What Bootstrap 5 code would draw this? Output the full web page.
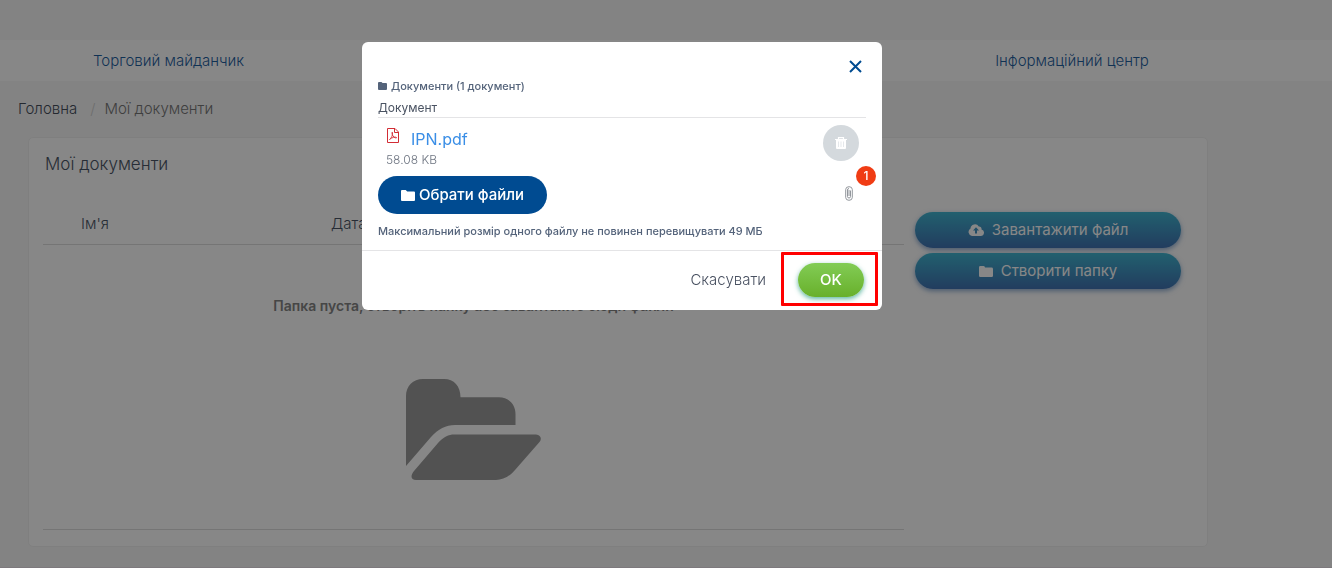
<!DOCTYPE html>
<html lang="uk">
<head>
<meta charset="utf-8">
<meta name="viewport" content="width=device-width, initial-scale=1">
<title>Мої документи</title>
<link href="https://cdn.jsdelivr.net/npm/bootstrap@5.3.0/dist/css/bootstrap.min.css" rel="stylesheet">
<style>
body{font-family:Inter,"Noto Sans",sans-serif;font-size:15px;font-weight:300;line-height:20px;color:#4a5666;background:#f8f8f8;min-height:100vh;border-bottom:1px solid #ece4ec}
.t11{font-size:11px}.t12{font-size:12px}
.topstrip{height:40px}
.mainnav{background:#fff;height:41px;padding-left:18px}
.mainnav a{color:#1f5f9f}
.crumbs{padding:18px 18px 0}
.crumbs .breadcrumb{--bs-breadcrumb-margin-bottom:18px;--bs-breadcrumb-divider-color:#d0d0d0;--bs-breadcrumb-item-active-color:#777}
.crumbs .breadcrumb-item+.breadcrumb-item{padding-left:13px}
.crumbs .breadcrumb-item+.breadcrumb-item::before{padding-right:9px}
.crumbs a{color:#454f5c}
.docs-wrap{padding:0 13px 0 28px}
.docs{border:1px solid #f0f0f0;border-radius:5px;padding:16px 26px 16px 14px}
.docs h1{font-size:17px;line-height:20px;font-weight:300;margin:0 0 38px 2px}
.files{--bs-table-color:#4a5666;margin:0}
.files th{font-weight:300;padding:2px 0 10px 38px;border-color:#dedede}
.files .col-name{width:250px}
.files td{padding:51px 0 49px;border-color:#dedede;text-align:center}
.files svg{display:block;margin:63px auto 0}
.empty-text{font-size:14px;font-weight:600;color:#858585}
.side{width:266px;margin-left:11px;gap:5px}
.btn-grad{height:36px;border:0;border-radius:18px;color:#fff;background:linear-gradient(#40b5d1,#4073b3);box-shadow:0 2px 5px #4073b399;font-size:15px;line-height:20px;padding:0 12px}
.btn-grad:hover{color:#fff}
.modal-backdrop.show{opacity:.47}
.upload{padding-right:88px}
.upload .modal-dialog{--bs-modal-width:520px;margin-top:42px;margin-bottom:16px}
.upload .modal-content{border:0;border-radius:6px}
.x-row{padding:13px 16px 1px}
.x-btn{width:22px;height:22px}
.caption-line{color:#54637a;font-weight:500;line-height:16px}
.limit{margin-top:9px;padding-bottom:11px}
.list-head{border-bottom:1px solid #e4e4e6;color:#4a5362;line-height:18px;margin-top:5px;font-weight:400}
.file-row{padding:7px 7px 0 8px}
.file-info{padding-top:3px}
.file-name{color:#3a8ee6;font-size:16px;font-weight:400;line-height:22px}
.file-size{color:#6d7480}
.trash{width:36px;height:36px;background:#d4d9dd}
.pick-row{margin-top:6px}
.btn-pick{height:38px;width:169px;border-radius:19px;background:#004b91;color:#fff;font-weight:500;font-size:15px;padding:0}
.btn-pick:hover{background:#00407c;color:#fff}
.count{width:20px;height:20px;right:-10px;top:-10px;background:#f03c14;color:#fff;font-size:12px;font-weight:500;line-height:20px}
.clip{width:34px;height:25px}
.foot{border-top:1px solid #e4e4e6;padding:12px 18px 13px 16px}
.btn-cancel{color:#4a5262;font-size:15px;font-weight:300;border:0;padding:0}
.btn-ok{width:66px;height:34px;border:0;border-radius:17px;background:linear-gradient(#82cc55,#68b02b);color:#fff;font-weight:500;font-size:15px;padding:0;box-shadow:0 2px 5px #36a58acc}
.btn-ok:hover{color:#fff}
.marker{position:absolute;left:-17px;right:-14px;top:-11px;bottom:-9px;border:3px solid #f00;border-radius:1px;pointer-events:none}
</style>
</head>
<body>
<div class="topstrip"></div>
<nav class="mainnav d-flex align-items-center">
  <div class="col-11"><div class="row g-0 text-center">
    <div class="col-3"><a class="text-decoration-none" href="#">Торговий майданчик</a></div>
    <div class="col-3 offset-6"><a class="text-decoration-none" href="#">Інформаційний центр</a></div>
  </div></div>
</nav>
<nav class="crumbs" aria-label="breadcrumb">
  <ol class="breadcrumb">
    <li class="breadcrumb-item"><a class="text-decoration-none" href="#">Головна</a></li>
    <li class="breadcrumb-item active" aria-current="page">Мої документи</li>
  </ol>
</nav>
<main class="col-11 docs-wrap">
  <section class="card docs">
    <h1>Мої документи</h1>
    <div class="d-flex align-items-start">
      <table class="table files flex-fill w-auto">
        <thead><tr><th scope="col" class="col-name">Ім'я</th><th scope="col">Дата</th></tr></thead>
        <tbody><tr><td colspan="2">
          <span class="empty-text">Папка пуста, створіть папку або завантажте сюди файли</span>
          <svg width="135" height="101" viewBox="0 0 135 101" fill="#9b9b9b" aria-hidden="true"><path d="M0 87V17C0 7 7 0 17 0H38C48 0 54.500 7 54.500 18.300H93C102 18.300 109.500 25 109.500 35V46H49C40 46 32 50 25 58Z"/><path d="M48 55.500H130C135 56 136 60 133.500 63L109 91C104 97 97 101 90 101H10C5 101 4 97 8 92L32 64C37 58 43 55.500 48 55.500Z"/></svg>
        </td></tr></tbody>
      </table>
      <div class="side d-grid">
        <button type="button" class="btn btn-grad d-flex align-items-center justify-content-center gap-2"><svg width="16" height="12" viewBox="0 0 16 12" fill="currentColor" aria-hidden="true"><path fill-rule="evenodd" d="M4 12A4 4 0 0 1 2.500 4.600 4.500 4.500 0 0 1 10.800 2.500 2.500 2.500 0 0 1 13.500 5.500 3.300 3.300 0 0 1 12.700 12ZM8 3.200 5 6.500H7V9.500H9V6.500H11Z"/></svg>Завантажити файл</button>
        <button type="button" class="btn btn-grad d-flex align-items-center justify-content-center gap-2"><svg width="14" height="11" viewBox="0 0 14 11" fill="currentColor" aria-hidden="true"><path d="M1.300 0H4.700Q6 0 6 1.600H12.600Q14 1.600 14 3V9.700Q14 11 12.700 11H1.300Q0 11 0 9.700V1.300Q0 0 1.300 0Z"/></svg>Створити папку</button>
      </div>
    </div>
  </section>
</main>

<div class="modal-backdrop show"></div>
<div class="modal upload show d-block" tabindex="-1" role="dialog" aria-label="Документи">
  <div class="modal-dialog">
    <div class="modal-content">
      <div class="x-row d-flex justify-content-end">
        <button type="button" class="x-btn btn p-0 border-0 d-flex align-items-center justify-content-center" aria-label="Закрити"><svg width="13" height="13" viewBox="0 0 13 13" stroke="#004b91" stroke-width="2" fill="none"><path d="M1 1 12 12M12 1 1 12"/></svg></button>
      </div>
      <div class="px-3">
        <div class="caption-line t11 d-flex align-items-center gap-1"><svg width="9" height="8" viewBox="0 0 9 8" fill="currentColor" aria-hidden="true"><path d="M1 0H3.500L4.500 1H8Q9 1 9 2V7Q9 8 8 8H1Q0 8 0 7V1Q0 0 1 0Z"/></svg>Документи (1 документ)</div>
        <div class="list-head t12">Документ</div>
        <div class="file-row d-flex justify-content-between">
          <div class="file-info">
            <div class="d-flex gap-2"><svg class="me-1" width="13" height="15" viewBox="0 0 13 15" fill="none" stroke="#d22d35" aria-hidden="true"><path d="M1.500.5H9L12.500 4V14.500H1.500ZM8.500 .5V4.500H12.500"/><path stroke-width=".9" d="M3.500 11.500C5 10.500 7 7.500 6.500 4.500 6 3 5.500 6 7 8 8.500 10 11 10.500 10.500 9.500 9.500 8.500 5.500 9.500 3.500 11.500Z"/></svg><a class="file-name text-decoration-none" href="#">IPN.pdf</a></div>
            <div class="t12 file-size">58.08 KB</div>
          </div>
          <button type="button" class="trash btn rounded-circle border-0 p-0 d-flex align-items-center justify-content-center flex-shrink-0" aria-label="Видалити"><svg width="12" height="12" viewBox="0 0 12 12"><path d="M0 2.500H12M3.500 2V.7H8.500V2" stroke="#fff" stroke-width="1.200" fill="none"/><path fill="#fff" d="M1 3H11V11Q11 12 10 12H2Q1 12 1 11Z"/><path d="M3.500 4.500V10M6 4.500V10M8.500 4.500V10" stroke="#d4d9dd" stroke-width=".6"/></svg></button>
        </div>
        <div class="pick-row d-flex justify-content-between position-relative">
          <button type="button" class="btn btn-pick d-flex align-items-center justify-content-center gap-1"><svg width="14" height="11" viewBox="0 0 14 11" fill="currentColor" aria-hidden="true"><path d="M1 0H4.700L6.200 1.600H13Q14 1.600 14 2.600V10Q14 11 13 11H1Q0 11 0 10V1Q0 0 1 0Z"/></svg>Обрати файли</button>
          <div class="clip d-flex align-items-end justify-content-center"><svg width="8" height="15" viewBox="0 0 8 15" fill="none" stroke="#92969c" aria-hidden="true"><path d="M5.500 4.500V10.500Q5.500 12 4 12T2.500 10.500V3.500M2.500 10V4Q2.500 2.500 4 2.500M.7 3.500Q.7.7 4 .7T7.300 3.500V11.500Q7.300 14.300 4 14.300T.7 11.500V3.500M4 4V10"/></svg></div>
          <span class="count position-absolute rounded-circle text-center">1</span>
        </div>
        <div class="caption-line limit t11">Максимальний розмір одного файлу не повинен перевищувати 49 МБ</div>
      </div>
      <div class="foot d-flex justify-content-end align-items-center">
        <button type="button" class="btn btn-cancel me-3">Скасувати</button>
        <div class="position-relative ms-3"><button type="button" class="btn btn-ok d-block">OK</button><div class="marker"></div></div>
      </div>
    </div>
  </div>
</div>
<script src="https://cdn.jsdelivr.net/npm/bootstrap@5.3.0/dist/js/bootstrap.bundle.min.js"></script>
</body>
</html>
